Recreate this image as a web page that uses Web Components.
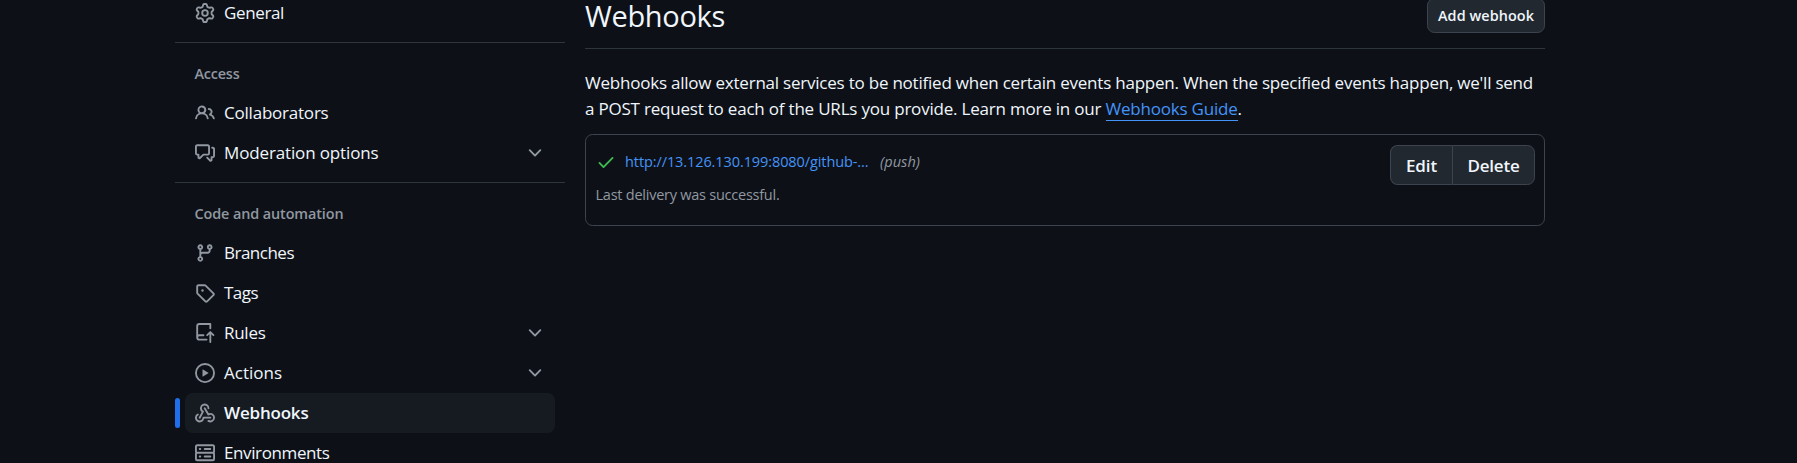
<!DOCTYPE html>
<html lang="en">
<head>
<meta charset="utf-8">
<title>Webhooks</title>
<style>
html,body{margin:0;height:463px;overflow:hidden;background:#0d1117}
body{font-family:"Open Sans","Noto Sans",sans-serif;color:#f0f6fc}
</style>
</head>
<body>
<settings-page></settings-page>
<script>
const ICONS={
gear:'<path d="M8 0a8.2 8.2 0 0 1 .701.031C9.444.095 9.99.645 10.16 1.29l.288 1.107c.018.066.079.158.212.224.231.114.454.243.668.386.123.082.233.09.299.071l1.103-.303c.644-.176 1.392.021 1.82.63.27.385.506.792.704 1.218.315.675.111 1.422-.364 1.891l-.814.806c-.049.048-.098.147-.088.294.016.257.016.515 0 .772-.01.147.038.246.088.294l.814.806c.475.469.679 1.216.364 1.891a7.977 7.977 0 0 1-.704 1.217c-.428.61-1.176.807-1.82.63l-1.102-.302c-.067-.019-.177-.011-.3.071a5.909 5.909 0 0 1-.668.386c-.133.066-.194.158-.211.224l-.29 1.106c-.168.646-.715 1.196-1.458 1.26a8.006 8.006 0 0 1-1.402 0c-.743-.064-1.289-.614-1.458-1.26l-.289-1.106c-.018-.066-.079-.158-.212-.224a5.738 5.738 0 0 1-.668-.386c-.123-.082-.233-.09-.299-.071l-1.103.303c-.644.176-1.392-.021-1.82-.63a8.12 8.12 0 0 1-.704-1.218c-.315-.675-.111-1.422.363-1.891l.815-.806c.05-.048.098-.147.088-.294a6.214 6.214 0 0 1 0-.772c.01-.147-.038-.246-.088-.294l-.815-.806C.635 6.045.431 5.298.746 4.623a7.92 7.92 0 0 1 .704-1.217c.428-.61 1.176-.807 1.82-.63l1.102.302c.067.019.177.011.3-.071.214-.143.437-.272.668-.386.133-.066.194-.158.211-.224l.29-1.106C6.009.645 6.556.095 7.299.03 7.53.01 7.764 0 8 0Zm-.571 1.525c-.036.003-.108.036-.137.146l-.289 1.105c-.147.561-.549.967-.998 1.189-.173.086-.34.183-.5.29-.417.278-.97.423-1.529.27l-1.103-.303c-.109-.03-.175.016-.195.045-.22.312-.412.644-.573.99-.014.031-.021.11.059.19l.815.806c.411.406.562.957.53 1.456a4.709 4.709 0 0 0 0 .582c.032.499-.119 1.05-.53 1.456l-.815.806c-.081.08-.073.159-.059.19.162.346.353.677.573.989.02.03.085.076.195.046l1.102-.303c.56-.153 1.113-.008 1.53.27.161.107.328.204.501.29.447.222.85.629.997 1.189l.289 1.105c.029.109.101.143.137.146a6.6 6.6 0 0 0 1.142 0c.036-.003.108-.036.137-.146l.289-1.105c.147-.561.549-.967.998-1.189.173-.086.34-.183.5-.29.417-.278.97-.423 1.529-.27l1.103.303c.109.029.175-.016.195-.045.22-.313.411-.644.573-.99.014-.031.021-.11-.059-.19l-.815-.806c-.411-.406-.562-.957-.53-1.456a4.709 4.709 0 0 0 0-.582c-.032-.499.119-1.05.53-1.456l.815-.806c.081-.08.073-.159.059-.19a6.464 6.464 0 0 0-.573-.989c-.02-.03-.085-.076-.195-.046l-1.102.303c-.56.153-1.113.008-1.53-.27a4.44 4.44 0 0 0-.501-.29c-.447-.222-.85-.629-.997-1.189l-.289-1.105c-.029-.11-.101-.143-.137-.146a6.6 6.6 0 0 0-1.142 0ZM11 8a3 3 0 1 1-6 0 3 3 0 0 1 6 0ZM9.5 8a1.5 1.5 0 1 0-3.001.001A1.5 1.5 0 0 0 9.5 8Z"/>',
people:'<path d="M2 5.5a3.5 3.5 0 1 1 5.898 2.549 5.508 5.508 0 0 1 3.034 4.084.75.75 0 1 1-1.482.235 4 4 0 0 0-7.9 0 .75.75 0 0 1-1.482-.236A5.507 5.507 0 0 1 3.102 8.05 3.493 3.493 0 0 1 2 5.5ZM11 4a3.001 3.001 0 0 1 2.22 5.018 5.01 5.01 0 0 1 2.56 3.012.749.749 0 0 1-.885.954.752.752 0 0 1-.549-.514 3.507 3.507 0 0 0-2.522-2.372.75.75 0 0 1-.574-.73v-.352a.75.75 0 0 1 .416-.672A1.5 1.5 0 0 0 11 5.5.75.75 0 0 1 11 4Zm-5.5-.5a2 2 0 1 0-.001 3.999A2 2 0 0 0 5.5 3.5Z"/>',
comments:'<path d="M1.75 1h8.5c.966 0 1.75.784 1.75 1.75v5.5A1.75 1.75 0 0 1 10.25 10H7.061l-2.574 2.573A1.458 1.458 0 0 1 2 11.543V10h-.25A1.75 1.75 0 0 1 0 8.25v-5.5C0 1.784.784 1 1.75 1ZM1.5 2.75v5.5c0 .138.112.25.25.25h1a.75.75 0 0 1 .75.75v2.19l2.72-2.72a.749.749 0 0 1 .53-.22h3.5a.25.25 0 0 0 .25-.25v-5.5a.25.25 0 0 0-.25-.25h-8.5a.25.25 0 0 0-.25.25Zm13 2a.25.25 0 0 0-.25-.25h-.5a.75.75 0 0 1 0-1.5h.5c.966 0 1.75.784 1.75 1.75v5.5A1.75 1.75 0 0 1 14.25 12H14v1.543a1.458 1.458 0 0 1-2.487 1.03L9.22 12.28a.749.749 0 0 1 .326-1.275.749.749 0 0 1 .734.215l2.22 2.22v-2.19a.75.75 0 0 1 .75-.75h1a.25.25 0 0 0 .25-.25Z"/>',
branch:'<path d="M9.5 3.25a2.25 2.25 0 1 1 3 2.122V6A2.5 2.5 0 0 1 10 8.5H6a1 1 0 0 0-1 1v1.128a2.251 2.251 0 1 1-1.5 0V5.372a2.25 2.25 0 1 1 1.5 0v1.836A2.493 2.493 0 0 1 6 7h4a1 1 0 0 0 1-1v-.628A2.25 2.25 0 0 1 9.5 3.25Zm-6 0a.75.75 0 1 0 1.5 0 .75.75 0 0 0-1.5 0Zm8.25-.75a.75.75 0 1 0 0 1.5.75.75 0 0 0 0-1.5ZM4.25 12a.75.75 0 1 0 0 1.5.75.75 0 0 0 0-1.5Z"/>',
tag:'<path d="M1 7.775V2.75C1 1.784 1.784 1 2.75 1h5.025c.464 0 .91.184 1.238.513l6.25 6.25a1.75 1.75 0 0 1 0 2.474l-5.026 5.026a1.75 1.75 0 0 1-2.474 0l-6.25-6.25A1.752 1.752 0 0 1 1 7.775Zm1.5 0c0 .066.026.13.073.177l6.25 6.25a.25.25 0 0 0 .354 0l5.025-5.025a.25.25 0 0 0 0-.354l-6.25-6.25a.25.25 0 0 0-.177-.073H2.75a.25.25 0 0 0-.25.25ZM6 5a1 1 0 1 1 0 2 1 1 0 0 1 0-2Z"/>',
rules:'<path d="M1 2.5A2.5 2.5 0 0 1 3.5 0h8.75a.75.75 0 0 1 .75.75v3.5a.75.75 0 0 1-1.5 0V1.5h-8a1 1 0 0 0-1 1v6.708A2.493 2.493 0 0 1 3.5 9h3.25a.75.75 0 0 1 0 1.5H3.5a1 1 0 0 0 0 2h5.75a.75.75 0 0 1 0 1.5H3.5A2.5 2.5 0 0 1 1 11.5Zm13.23 7.79-1.23-1.224v6.184a.75.75 0 0 1-1.5 0V9.066L10.28 10.28a.75.75 0 0 1-1.06-1.06l2.505-2.504a.75.75 0 0 1 1.06 0L15.29 9.22a.751.751 0 0 1-.018 1.042.751.751 0 0 1-1.042.028Z"/>',
play:'<path d="M8 0a8 8 0 1 1 0 16A8 8 0 0 1 8 0ZM1.5 8a6.5 6.5 0 1 0 13 0 6.5 6.5 0 0 0-13 0Zm4.879-2.773 4.264 2.559a.25.25 0 0 1 0 .428l-4.264 2.559A.25.25 0 0 1 6 10.559V5.442a.25.25 0 0 1 .379-.215Z"/>',
webhook:'<path d="M5.5 4.25a2.25 2.25 0 0 1 4.5 0 .75.75 0 0 0 1.5 0 3.75 3.75 0 1 0-6.14 2.889l-2.272 4.258a.75.75 0 0 0 1.324.706L7 7.25a.75.75 0 0 0-.309-1.015A2.25 2.25 0 0 1 5.5 4.25Z"/><path d="M7.364 3.607a.75.75 0 0 1 1.03.257l2.608 4.349a3.75 3.75 0 1 1-.628 6.785.75.75 0 0 1 .752-1.299 2.25 2.25 0 1 0-.033-3.88.75.75 0 0 1-1.03-.256L7.107 4.636a.75.75 0 0 1 .257-1.03Z"/><path d="M2.9 8.776A.75.75 0 0 1 2.625 9.8 2.25 2.25 0 1 0 6 11.75a.75.75 0 0 1 .75-.751h5.5a.75.75 0 0 1 0 1.5H7.425a3.751 3.751 0 1 1-5.55-3.998.75.75 0 0 1 1.024.274Z"/>',
server:'<path d="M1.75 1h12.5c.966 0 1.75.784 1.75 1.75v4c0 .372-.116.717-.314 1 .198.283.314.628.314 1v4a1.75 1.75 0 0 1-1.75 1.75H1.75A1.75 1.75 0 0 1 0 12.75v-4c0-.358.109-.707.314-1a1.739 1.739 0 0 1-.314-1v-4C0 1.784.784 1 1.75 1ZM1.5 2.75v4c0 .138.112.25.25.25h12.5a.25.25 0 0 0 .25-.25v-4a.25.25 0 0 0-.25-.25H1.75a.25.25 0 0 0-.25.25Zm.25 5.75a.25.25 0 0 0-.25.25v4c0 .138.112.25.25.25h12.5a.25.25 0 0 0 .25-.25v-4a.25.25 0 0 0-.25-.25ZM7 4.75A.75.75 0 0 1 7.75 4h4.5a.75.75 0 0 1 0 1.5h-4.5A.75.75 0 0 1 7 4.75ZM7.75 10h4.5a.75.75 0 0 1 0 1.5h-4.5a.75.75 0 0 1 0-1.5ZM3 4.75A.75.75 0 0 1 3.75 4h.5a.75.75 0 0 1 0 1.5h-.5A.75.75 0 0 1 3 4.75ZM3.75 10h.5a.75.75 0 0 1 0 1.5h-.5a.75.75 0 0 1 0-1.5Z"/>',
chevron:'<path d="M12.78 5.22a.749.749 0 0 1 0 1.06l-4.25 4.25a.749.749 0 0 1-1.06 0L3.22 6.28a.749.749 0 1 1 1.06-1.06L8 8.939l3.72-3.719a.749.749 0 0 1 1.06 0Z"/>',
check:'<path d="M13.78 4.22a.75.75 0 0 1 0 1.06l-7.25 7.25a.75.75 0 0 1-1.06 0L2.22 9.28a.751.751 0 0 1 .018-1.042.751.751 0 0 1 1.042-.018L6 10.94l6.72-6.72a.75.75 0 0 1 1.06 0Z"/>'};

class OctIcon extends HTMLElement{
  connectedCallback(){
    this.attachShadow({mode:'open'}).innerHTML=`<style>:host{display:block;width:20px;height:20px;flex:none}svg{display:block}</style><svg width="20" height="20" viewBox="0 0 16 16" fill="currentColor">${ICONS[this.getAttribute('name')]}</svg>`;
  }
}
customElements.define('oct-icon',OctIcon);

/* Text run whose tracking is adjusted so that it occupies the given width. */
class FitText extends HTMLElement{
  connectedCallback(){
    this.attachShadow({mode:'open'}).innerHTML='<style>:host{display:inline-block;white-space:pre}</style><slot></slot>';
    const target=+this.getAttribute('width');
    const natural=this.getBoundingClientRect().width;
    this.style.letterSpacing=(target-natural)/this.textContent.length+'px';
  }
}
customElements.define('fit-text',FitText);

class NavItem extends HTMLElement{
  connectedCallback(){
    const a=n=>this.getAttribute(n);
    this.attachShadow({mode:'open'}).innerHTML=`<style>
:host{display:flex;height:40px;padding:0 10px}
.bar{width:5px;height:30px;margin:5px 5px 0 -10px;border-radius:5px;flex:none}
.row{flex:1;display:flex;align-items:center;gap:9px;padding:0 10px;border-radius:7.5px;font-size:17px;line-height:26px}
:host([current]) .row{background:#161b22;font-weight:600}
:host([current]) .bar{background:#1f6feb}
oct-icon{color:#9198a1}
.end{margin-left:auto}
</style><div class="bar"></div><div class="row"><oct-icon name="${a('icon')}"></oct-icon><fit-text width="${a('width')}">${a('label')}</fit-text>${this.hasAttribute('expandable')?'<oct-icon class="end" name="chevron"></oct-icon>':''}</div>`;
  }
}
customElements.define('nav-item',NavItem);

class NavSection extends HTMLElement{
  connectedCallback(){
    this.attachShadow({mode:'open'}).innerHTML=`<style>
:host{display:block;border-top:1px solid #2f353d;margin-top:9px}
h3{margin:0;height:50px;padding:11px 19.5px 0;display:flex;align-items:center;box-sizing:border-box;font-size:14.4px;font-weight:600;line-height:22px;color:#9198a1}
</style><h3><fit-text width="${this.getAttribute('width')}">${this.getAttribute('label')}</fit-text></h3><slot></slot>`;
  }
}
customElements.define('nav-section',NavSection);

class UiButton extends HTMLElement{
  connectedCallback(){
    this.attachShadow({mode:'open'}).innerHTML=`<style>
:host{display:flex;box-sizing:border-box;align-items:center;justify-content:center;background:#212830;border:1px solid #3d444d;border-radius:7.5px;font-weight:600;color:#f0f6fc}
</style><slot></slot>`;
  }
}
customElements.define('ui-button',UiButton);

class WebhookCard extends HTMLElement{
  connectedCallback(){
    this.attachShadow({mode:'open'}).innerHTML=`<style>
:host{display:flex;justify-content:space-between;box-sizing:border-box;height:92px;border:1px solid #3d444d;border-radius:7.5px;padding:10px 9px 0 9.5px;font-size:14.5px;line-height:22px}
.line{display:flex;align-items:center;padding-top:6px}
oct-icon{color:#3fb950;margin-right:9.5px}
a{color:#4493f8}
em{color:#9198a1;margin-left:11.5px}
p{margin:11px 0 0;color:#9198a1}
.group{display:flex;height:40px;font-size:17px}
.edit{width:62px;border-radius:7.5px 0 0 7.5px;border-right:0;padding-top:1px}
.del{width:83px;border-radius:0 7.5px 7.5px 0;padding-top:1px}
</style>
<div><div class="line"><oct-icon name="check"></oct-icon><a><fit-text width="243.5">http://13.126.130.199:8080/github-...</fit-text></a><em><fit-text width="40">(push)</fit-text></em></div>
<p><fit-text width="184">Last delivery was successful.</fit-text></p></div>
<div class="group"><ui-button class="edit"><fit-text width="31">Edit</fit-text></ui-button><ui-button class="del"><fit-text width="52">Delete</fit-text></ui-button></div>`;
  }
}
customElements.define('webhook-card',WebhookCard);

class SettingsPage extends HTMLElement{
  connectedCallback(){
    this.attachShadow({mode:'open'}).innerHTML=`<style>
:host{display:grid;grid-template-columns:390px 960px;column-gap:20px;padding-left:175px;height:463px;overflow:hidden;box-sizing:border-box}
nav{margin-top:-7px}
header{display:flex;justify-content:space-between;height:48px;border-bottom:1px solid #2f353d}
h2{margin:0;font-size:29px;line-height:32px;font-weight:400}
.add{width:118px;height:35px;margin-top:-2px;font-size:14.4px}
.intro{margin:21px 0 12px;font-size:17px;line-height:26px}
.intro div{white-space:nowrap;height:26px}
a{color:#4493f8}
.guide{border-bottom:1px solid #4493f8;display:inline-block;line-height:22px}
</style>
<nav>
<nav-item icon="gear" label="General" width="60"></nav-item>
<nav-section label="Access" width="45">
<nav-item icon="people" label="Collaborators" width="104.5"></nav-item>
<nav-item icon="comments" label="Moderation options" width="154.5" expandable></nav-item>
</nav-section>
<nav-section label="Code and automation" width="149">
<nav-item icon="branch" label="Branches" width="70"></nav-item>
<nav-item icon="tag" label="Tags" width="34"></nav-item>
<nav-item icon="rules" label="Rules" width="41.5" expandable></nav-item>
<nav-item icon="play" label="Actions" width="58" expandable></nav-item>
<nav-item icon="webhook" label="Webhooks" width="84.5" current></nav-item>
<nav-item icon="server" label="Environments" width="105.5"></nav-item>
</nav-section>
</nav>
<main>
<header><h2><fit-text width="140">Webhooks</fit-text></h2><ui-button class="add"><fit-text width="96">Add webhook</fit-text></ui-button></header>
<div class="intro"><div><fit-text width="948">Webhooks allow external services to be notified when certain events happen. When the specified events happen, we'll send</fit-text></div>
<div><fit-text width="520.5">a POST request to each of the URLs you provide. Learn more in our </fit-text><a class="guide"><fit-text width="132">Webhooks Guide</fit-text></a>.</div></div>
<webhook-card></webhook-card>
</main>`;
  }
}
customElements.define('settings-page',SettingsPage);
</script>
</body>
</html>
